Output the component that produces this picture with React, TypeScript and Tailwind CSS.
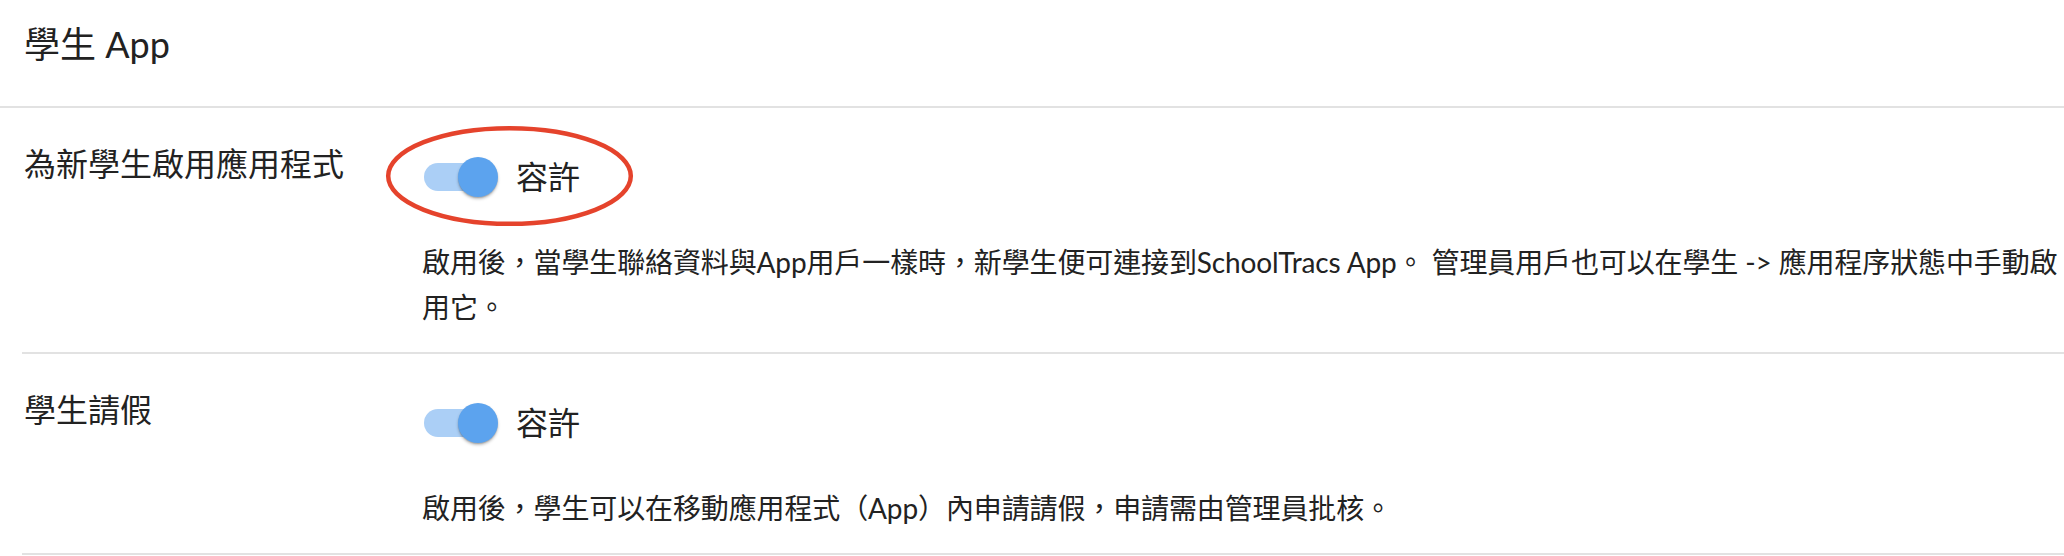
import React from "react";

const FONT = "font-['Lato','Noto_Sans_CJK_TC','Noto_Sans',sans-serif]";

function Toggle() {
  return (
    <div className="relative ml-[2px] h-[28px] w-[68px] shrink-0 rounded-full bg-[#abcff6]">
      <div className="absolute left-[34px] top-[-6px] h-[40px] w-[40px] rounded-full bg-[#5ca3ee] shadow-[0_2px_3px_rgba(0,0,0,0.25),0_1px_1px_rgba(0,0,0,0.14)]" />
    </div>
  );
}

function Row({
  label,
  lines,
  circled,
}: {
  label: string;
  lines: string[];
  circled?: boolean;
}) {
  return (
    <div className="ml-[22px] flex border-b-2 border-[#e2e2e2] pb-[22px]">
      <div className="w-[400px] shrink-0 pl-[2px] pt-[32px] text-[32px] leading-[48px] text-[#222]">
        {label}
      </div>
      <div className="min-w-0 flex-1 pt-[31px]">
        <div className="relative flex h-[76px] items-center">
          <Toggle />
          <span className="ml-[24px] text-[32px] leading-[48px] text-[#222]">容許</span>
          {circled && (
            <svg
              className="pointer-events-none absolute left-[-38px] top-[-15px]"
              width="256"
              height="106"
              viewBox="0 0 256 106"
            >
              <ellipse
                cx="125.5"
                cy="52"
                rx="121.3"
                ry="47.8"
                fill="none"
                stroke="#e5432c"
                strokeWidth="4.5"
              />
            </svg>
          )}
        </div>
        <div className="mt-[25px] text-[28px] leading-[45px] tracking-[-0.12px] text-[#222]">
          {lines.map((l, i) => (
            <div key={i} className="whitespace-nowrap">
              {l}
            </div>
          ))}
        </div>
      </div>
    </div>
  );
}

export default function App() {
  return (
    <div className={`h-[556px] w-[2064px] overflow-hidden bg-white ${FONT}`}>
      <div className="h-[108px] border-b-2 border-[#e2e2e2] pl-[24px] pt-[22px] text-[36px] leading-[44px] text-[#222]">
        學生 App
      </div>
      <Row
        circled
        label="為新學生啟用應用程式"
        lines={[
          "啟用後，當學生聯絡資料與App用戶一樣時，新學生便可連接到SchoolTracs App。 管理員用戶也可以在學生 -> 應用程序狀態中手動啟",
          "用它。",
        ]}
      />
      <Row
        label="學生請假"
        lines={["啟用後，學生可以在移動應用程式（App）內申請請假，申請需由管理員批核。"]}
      />
    </div>
  );
}
